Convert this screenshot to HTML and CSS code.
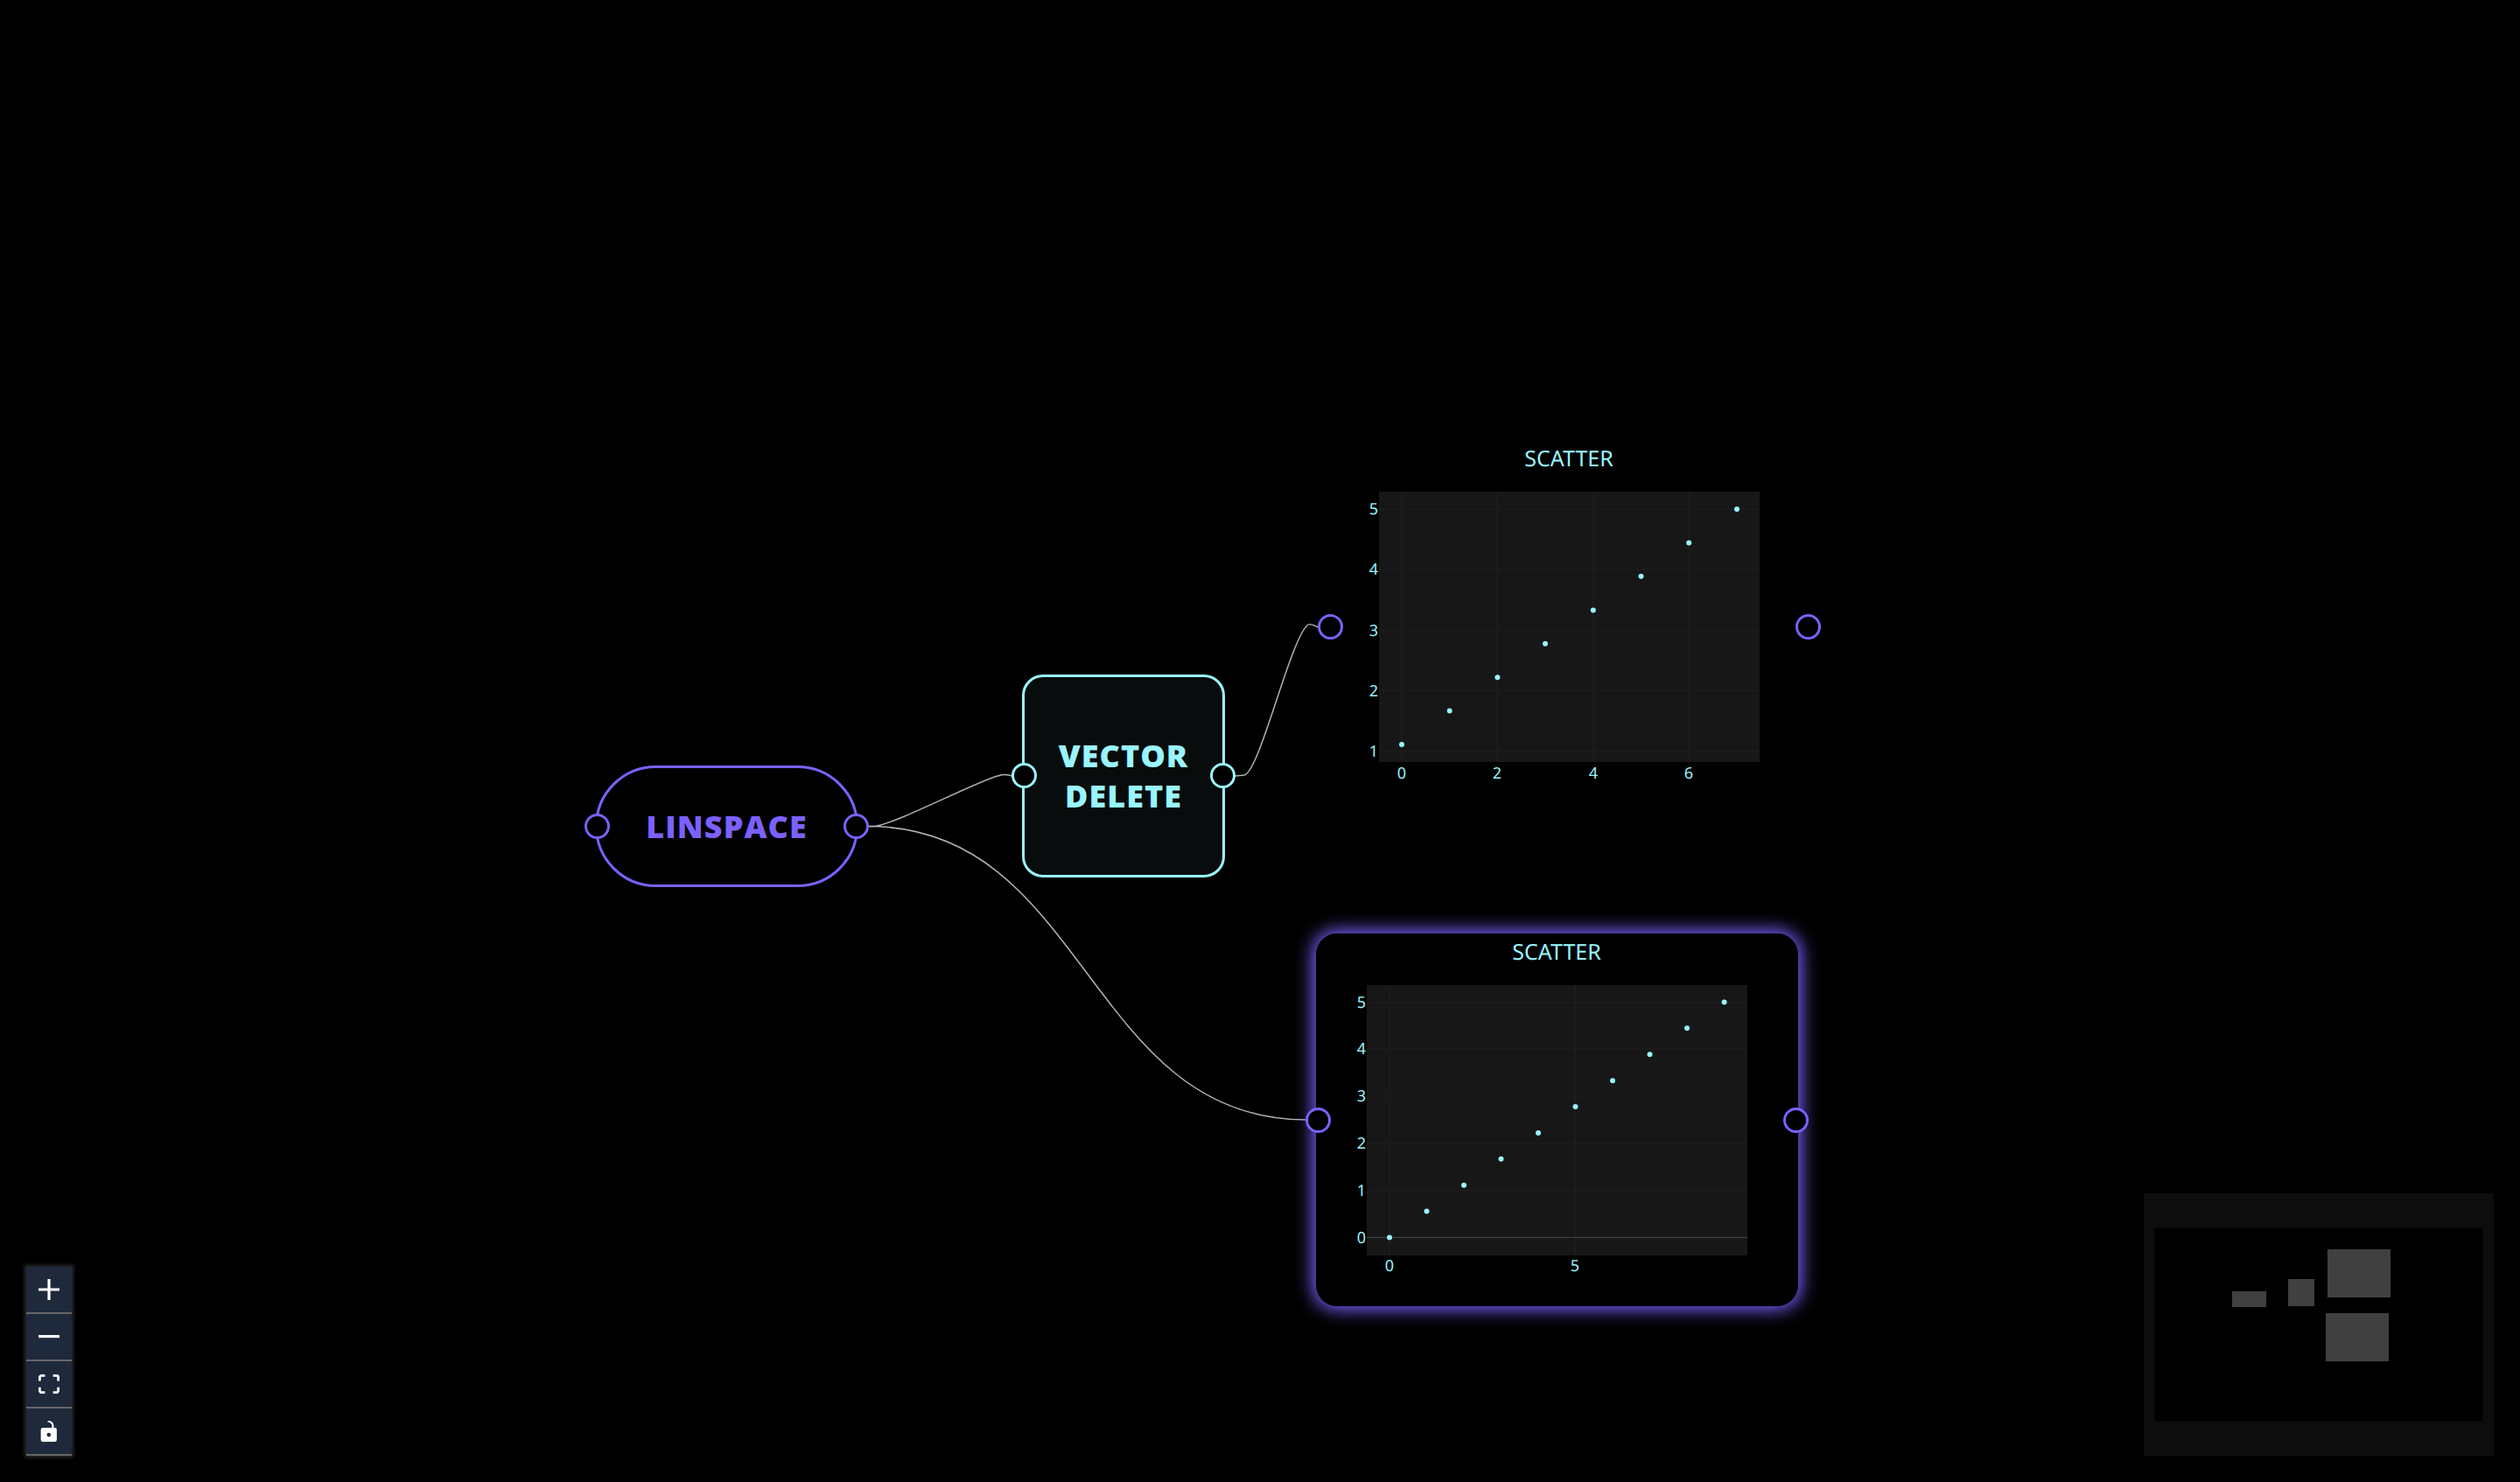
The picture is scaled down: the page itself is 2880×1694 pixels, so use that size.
FILE: index.html
```html
<!DOCTYPE html>
<html lang="en">
<head>
<meta charset="utf-8">
<title>Flow editor</title>
<link rel="stylesheet" href="styles.css">
</head>
<body>
<main class="canvas">
  <svg class="edges" aria-hidden="true">
    <path d="M992 944.5 L999 944.5 C1022 943 1120 891 1142 886.5 Q1147 884.500 1157 887"/>
    <path d="M992 944.5 C1242 944.5 1242 1280 1493 1280"/>
    <path d="M1411 887 L1422 886 C1440 882 1475 728 1495 714 Q1497 712.500 1507 717"/>
  </svg>

  <section class="node node-linspace">
    <span class="handle handle-left"></span>
    <h2 class="node-label">LINSPACE</h2>
    <span class="handle handle-right"></span>
  </section>

  <section class="node node-vector">
    <span class="handle handle-left"></span>
    <h2 class="node-label">VECTOR DELETE</h2>
    <span class="handle handle-right"></span>
  </section>

  <section class="node node-plot node-plot-a">
    <span class="handle handle-left"></span>
    <svg class="chart" viewBox="0 0 551 426" role="img" aria-label="Scatter of the shortened vector">
      <text class="chart-title" x="275" y="30">SCATTER</text>
      <rect class="plot-area" x="58" y="59" width="435" height="309"/>
      <path class="grid" d="M84 59V368M193 59V368M303 59V368M412 59V368M58 79H493M58 148H493M58 217H493M58 286H493M58 356H493"/>
      <g class="ticks-y">
        <text x="57" y="85">5</text><text x="57" y="154">4</text><text x="57" y="224">3</text><text x="57" y="293">2</text><text x="57" y="362">1</text>
      </g>
      <g class="ticks-x">
        <text x="84" y="387">0</text><text x="193" y="387">2</text><text x="303" y="387">4</text><text x="412" y="387">6</text>
      </g>
      <g class="points">
        <circle cx="84" cy="348" r="3"/><circle cx="138.700" cy="309.600" r="3"/><circle cx="193.400" cy="271.200" r="3"/><circle cx="248" cy="232.800" r="3"/><circle cx="302.800" cy="194.400" r="3"/><circle cx="357.500" cy="155.800" r="3"/><circle cx="412.200" cy="117.400" r="3"/><circle cx="467" cy="79" r="3"/>
      </g>
    </svg>
    <span class="handle handle-right"></span>
  </section>

  <section class="node node-plot node-plot-b selected">
    <span class="handle handle-left"></span>
    <svg class="chart" viewBox="0 0 551 426" role="img" aria-label="Scatter of the full vector">
      <text class="chart-title" x="275" y="30">SCATTER</text>
      <rect class="plot-area" x="58" y="59" width="435" height="309"/>
      <path class="grid" d="M84 59V368M296 59V368M58 79H493M58 132H493M58 186H493M58 240H493M58 294H493"/>
      <path class="zero" d="M58 347.500H493"/>
      <g class="ticks-y">
        <text x="57" y="85">5</text><text x="57" y="138">4</text><text x="57" y="192">3</text><text x="57" y="246">2</text><text x="57" y="300">1</text><text x="57" y="354">0</text>
      </g>
      <g class="ticks-x">
        <text x="84" y="386">0</text><text x="296" y="386">5</text>
      </g>
      <g class="points">
        <circle cx="84" cy="347.500" r="3"/><circle cx="126.500" cy="317.600" r="3"/><circle cx="169" cy="287.700" r="3"/><circle cx="211.500" cy="257.800" r="3"/><circle cx="254" cy="228" r="3"/><circle cx="296.500" cy="198" r="3"/><circle cx="339" cy="168.200" r="3"/><circle cx="381.500" cy="138.200" r="3"/><circle cx="424" cy="108.300" r="3"/><circle cx="466.600" cy="78.500" r="3"/>
      </g>
    </svg>
    <span class="handle handle-right"></span>
  </section>

  <div class="controls">
    <button type="button" class="control" aria-label="Zoom in"><svg viewBox="0 0 32 32"><path d="M32 18.133H18.133V32h-4.266V18.133H0v-4.266h13.867V0h4.266v13.867H32z"/></svg></button>
    <button type="button" class="control" aria-label="Zoom out"><svg viewBox="0 0 32 5"><path d="M0 0h32v4.200H0z"/></svg></button>
    <button type="button" class="control" aria-label="Fit view"><svg viewBox="0 0 32 30"><path d="M3.692 4.630c0-.530.400-.938.939-.938h5.215V0H4.708C2.130 0 0 2.054 0 4.630v5.216h3.692V4.631zM27.354 0h-5.200v3.692h5.170c.530 0 .984.400.984.939v5.215H32V4.631A4.624 4.624 0 0027.354 0zm.954 24.830c0 .532-.400.940-.939.940h-5.215v3.768h5.215c2.577 0 4.631-2.130 4.631-4.707v-5.139h-3.692v5.139zm-23.677.940c-.531 0-.939-.400-.939-.940v-5.138H0v5.139c0 2.577 2.130 4.707 4.708 4.707h5.138V25.770H4.631z"/></svg></button>
    <button type="button" class="control" aria-label="Toggle interactivity"><svg viewBox="0 0 25 32"><path d="M21.333 10.667H19.810V7.619C19.810 3.429 16.380 0 12.190 0c-4.114 1.828-1.370 2.133.305 2.438 1.676.305 4.420 2.590 4.420 5.181v3.048H3.047A3.056 3.056 0 000 13.714v15.238A3.056 3.056 0 003.048 32h18.285a3.056 3.056 0 003.048-3.048V13.714a3.056 3.056 0 00-3.048-3.047zM12.190 24.533a3.056 3.056 0 01-3.047-3.047 3.056 3.056 0 013.047-3.048 3.056 3.056 0 013.048 3.048 3.056 3.056 0 01-3.048 3.047z"/></svg></button>
  </div>

  <svg class="minimap" viewBox="0 0 400 300" role="img" aria-label="Mini map">
    <rect class="minimap-view" x="12.500" y="39.500" width="375" height="221"/>
    <g class="minimap-nodes">
      <rect x="101" y="112" width="39" height="18"/>
      <rect x="165" y="98" width="30" height="31"/>
      <rect x="210" y="64" width="72" height="55"/>
      <rect x="208" y="137" width="72" height="55"/>
    </g>
  </svg>
</main>
</body>
</html>
```

FILE: styles.css
```css
:root {
  --purple: #7b61ff;
  --cyan: #99f5ff;
}

* {
  box-sizing: border-box;
}

body {
  margin: 0;
  background: #000;
  font-family: "Open Sans", "Noto Sans", sans-serif;
}

.canvas {
  position: relative;
  height: 100vh;
  overflow: hidden;
}

.edges {
  position: absolute;
  inset: 0;
  width: 100%;
  height: 100%;
  fill: none;
  stroke: #b1b1b7;
  stroke-width: 1.500;
}

/* Nodes on the free canvas */
.node {
  position: absolute;
  display: flex;
  align-items: center;
  justify-content: center;
  color: var(--accent);
  --accent: var(--purple);
}

.node-linspace {
  left: 680px;
  top: 875px;
  width: 301px;
  height: 139px;
  border: 3px solid var(--accent);
  border-radius: 70px;
}

.node-vector {
  --accent: var(--cyan);
  left: 1168px;
  top: 771px;
  width: 232px;
  height: 232px;
  padding: 0 24px;
  border: 3px solid var(--accent);
  border-radius: 24px;
  background: #080c0d;
}

.node-label {
  margin: 0;
  font-size: 36px;
  font-weight: 800;
  line-height: 46px;
  letter-spacing: 1px;
  text-align: center;
}

.node-plot {
  width: 551px;
  height: 426px;
  border-radius: 24px;
}

.node-plot-a {
  left: 1518px;
  top: 503px;
}

.node-plot-b {
  left: 1504px;
  top: 1067px;
}

.selected {
  box-shadow: 0 0 20px 4px var(--purple);
  background: #000;
}

.handle {
  position: absolute;
  top: 50%;
  width: 29px;
  height: 29px;
  margin-top: -15px;
  border: 3px solid var(--accent);
  border-radius: 50%;
  background: #000;
}

.handle-left {
  left: -15px;
}

.handle-right {
  right: -15px;
}

.node-plot .handle {
  margin-top: -14px;
}

.node-plot .handle-left {
  left: -12px;
}

.node-plot .handle-right {
  right: -12px;
}

/* Charts */
.chart {
  width: 100%;
  height: 100%;
  fill: var(--cyan);
  font-family: "Noto Sans", "Open Sans", sans-serif;
  font-size: 18px;
  text-rendering: geometricPrecision;
}

.chart-title {
  font-size: 25px;
  text-anchor: middle;
}

.plot-area {
  fill: #171717;
}

.grid {
  stroke: #1b1b1b;
  stroke-width: 2;
}

.zero {
  stroke: #444;
  stroke-width: 1;
}

.ticks-y {
  text-anchor: end;
}

.ticks-x {
  text-anchor: middle;
}

/* Viewport controls */
.controls {
  position: absolute;
  left: 30px;
  bottom: 30px;
  display: flex;
  flex-direction: column;
  box-shadow: 0 0 4px 2px #2a2a2a;
}

.control {
  display: flex;
  align-items: center;
  justify-content: center;
  width: 52px;
  height: 54px;
  padding: 0;
  border: 0;
  border-bottom: 2px solid #676767;
  background: #1e293b;
}

.control svg {
  width: 24px;
  max-height: 24px;
  fill: #fff;
}

.minimap {
  position: absolute;
  right: 30px;
  bottom: 30px;
  width: 400px;
  height: 300px;
  background: #0d0d0d;
}

.minimap-view {
  fill: #000;
  stroke: #070707;
}

.minimap-nodes {
  fill: #404040;
}
```
